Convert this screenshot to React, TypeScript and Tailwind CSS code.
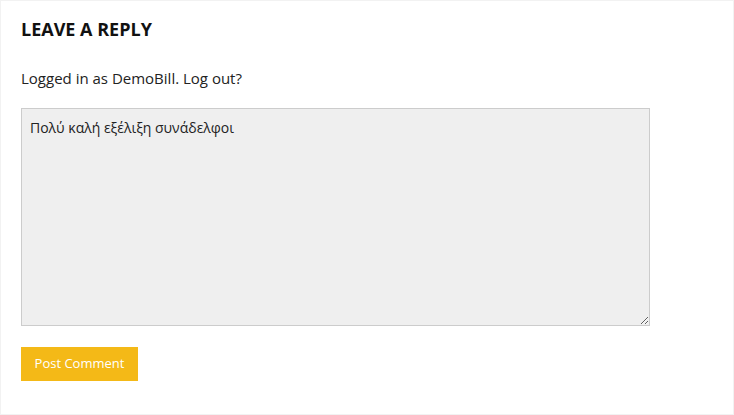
export default function App() {
  return (
    <div
      className="h-[415px] w-[734px] bg-white border border-[#f2f2f2] px-5 pt-[16px]"
      style={{ fontFamily: '"Open Sans", sans-serif' }}
    >
      {/* Heading */}
      <h3 className="text-[18px] leading-[24px] font-bold uppercase text-[#111]">Leave a Reply</h3>

      <p className="mt-[26px] text-[15px] leading-[22px] text-[#222]">
        Logged in as DemoBill. Log out?
      </p>

      {/* Comment box */}
      <textarea
        defaultValue="Πολύ καλή εξέλιξη συνάδελφοι"
        className="mt-[19px] block w-[629px] h-[218px] bg-[#efefef] border border-[#cccccc] px-2 py-[9px] text-[14px] leading-[20px] text-[#222] outline-none"
      />

      <button className="mt-[21px] block h-[34px] w-[117px] bg-[#f4b917] text-[13px] text-white">
        Post Comment
      </button>
    </div>
  );
}
